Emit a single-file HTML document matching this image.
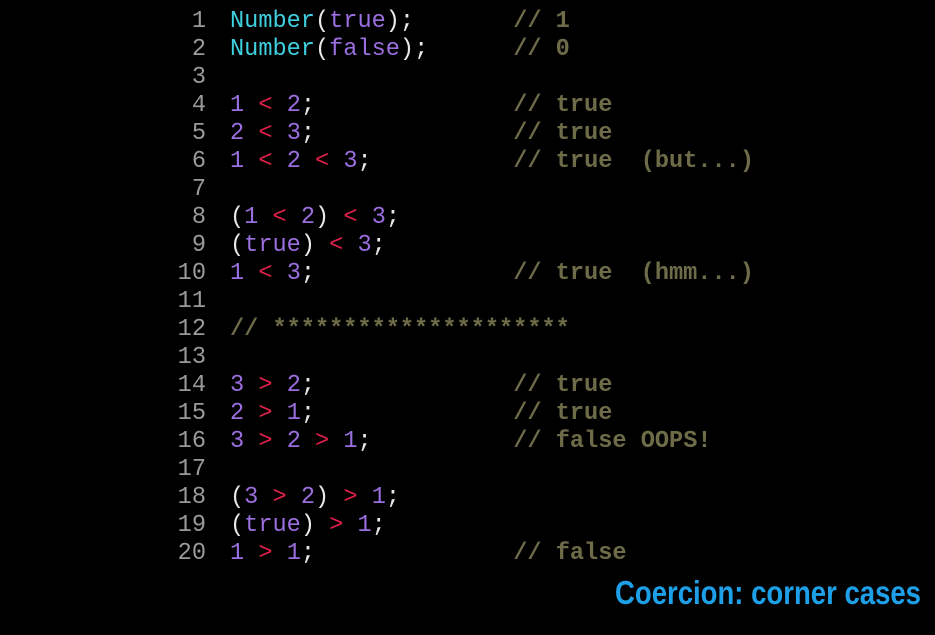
<!DOCTYPE html>
<html><head><meta charset="utf-8"><style>
html,body{margin:0;padding:0;background:#000;width:935px;height:635px;overflow:hidden}
.ln{position:absolute;left:160px;width:46px;text-align:right;font:23.6px/28px "Liberation Mono",monospace;color:#9a9a9a}
.c{position:absolute;left:230px;font:23.6px/28px "Liberation Mono",monospace;color:#e8e8e8;white-space:pre}
.k{color:#3fd0e0}.p{color:#9b6fe0}.r{color:#e0204a}.m{color:#6e6c48;font-weight:bold}
.t{position:absolute;left:615px;top:574px;font:bold 33px "Liberation Sans Narrow","Liberation Sans",sans-serif;color:#1ea0e8;white-space:nowrap;transform-origin:0 0}
</style></head><body>
<div class="ln" style="top:8px">1</div><div class="c" style="top:8px"><span class="k">Number</span>(<span class="p">true</span>);       <span class="m">// 1</span></div>
<div class="ln" style="top:36px">2</div><div class="c" style="top:36px"><span class="k">Number</span>(<span class="p">false</span>);      <span class="m">// 0</span></div>
<div class="ln" style="top:64px">3</div>
<div class="ln" style="top:92px">4</div><div class="c" style="top:92px"><span class="p">1</span> <span class="r">&lt;</span> <span class="p">2</span>;              <span class="m">// true</span></div>
<div class="ln" style="top:120px">5</div><div class="c" style="top:120px"><span class="p">2</span> <span class="r">&lt;</span> <span class="p">3</span>;              <span class="m">// true</span></div>
<div class="ln" style="top:148px">6</div><div class="c" style="top:148px"><span class="p">1</span> <span class="r">&lt;</span> <span class="p">2</span> <span class="r">&lt;</span> <span class="p">3</span>;          <span class="m">// true  (but...)</span></div>
<div class="ln" style="top:176px">7</div>
<div class="ln" style="top:204px">8</div><div class="c" style="top:204px">(<span class="p">1</span> <span class="r">&lt;</span> <span class="p">2</span>) <span class="r">&lt;</span> <span class="p">3</span>;</div>
<div class="ln" style="top:232px">9</div><div class="c" style="top:232px">(<span class="p">true</span>) <span class="r">&lt;</span> <span class="p">3</span>;</div>
<div class="ln" style="top:260px">10</div><div class="c" style="top:260px"><span class="p">1</span> <span class="r">&lt;</span> <span class="p">3</span>;              <span class="m">// true  (hmm...)</span></div>
<div class="ln" style="top:288px">11</div>
<div class="ln" style="top:316px">12</div><div class="c" style="top:316px"><span class="m">// *********************</span></div>
<div class="ln" style="top:344px">13</div>
<div class="ln" style="top:372px">14</div><div class="c" style="top:372px"><span class="p">3</span> <span class="r">&gt;</span> <span class="p">2</span>;              <span class="m">// true</span></div>
<div class="ln" style="top:400px">15</div><div class="c" style="top:400px"><span class="p">2</span> <span class="r">&gt;</span> <span class="p">1</span>;              <span class="m">// true</span></div>
<div class="ln" style="top:428px">16</div><div class="c" style="top:428px"><span class="p">3</span> <span class="r">&gt;</span> <span class="p">2</span> <span class="r">&gt;</span> <span class="p">1</span>;          <span class="m">// false OOPS!</span></div>
<div class="ln" style="top:456px">17</div>
<div class="ln" style="top:484px">18</div><div class="c" style="top:484px">(<span class="p">3</span> <span class="r">&gt;</span> <span class="p">2</span>) <span class="r">&gt;</span> <span class="p">1</span>;</div>
<div class="ln" style="top:512px">19</div><div class="c" style="top:512px">(<span class="p">true</span>) <span class="r">&gt;</span> <span class="p">1</span>;</div>
<div class="ln" style="top:540px">20</div><div class="c" style="top:540px"><span class="p">1</span> <span class="r">&gt;</span> <span class="p">1</span>;              <span class="m">// false</span></div>
<div class="t" id="t">Coercion: corner cases</div>
<script>
var t=document.getElementById('t');var w=t.getBoundingClientRect().width;t.style.transform='scaleX('+(306/w)+')';
</script>
</body></html>
